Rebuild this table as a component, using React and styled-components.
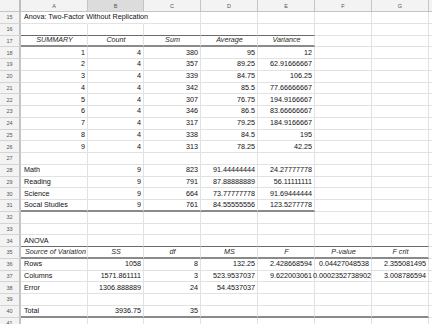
import React from "react";
import styled, { createGlobalStyle } from "styled-components";

const GlobalStyle = createGlobalStyle`
  html, body {
    margin: 0;
    padding: 0;
    background: #ffffff;
    overflow: hidden;
  }
`;

const Sheet = styled.div`
  display: grid;
  grid-template-columns: 21px 67px 56px 57px 57px 57px 57px 57px 1fr;
  grid-template-rows: 12px;
  grid-auto-rows: 11.75px;
  width: 432px;
  height: 324px;
  overflow: hidden;
  background: #ffffff;
  font-family: "Liberation Sans", Arial, sans-serif;
  color: #111111;
`;

const Corner = styled.div`
  box-sizing: border-box;
  background: #f3f3f3;
  border-right: 2px solid #bdbdbd;
  border-bottom: 1px solid #c4c4c4;
`;

const ColHead = styled.div`
  box-sizing: border-box;
  display: flex;
  align-items: center;
  justify-content: center;
  font-size: 5.5px;
  color: #555555;
  background: ${(p) => (p.$active ? "#dcdcdc" : "#f3f3f3")};
  border-right: 1px solid #c4c4c4;
  border-bottom: 1px solid #c4c4c4;
`;

const RowHead = styled.div`
  box-sizing: border-box;
  display: flex;
  align-items: center;
  justify-content: center;
  font-size: 5.5px;
  color: #555555;
  background: #f3f3f3;
  border-right: 2px solid #c4c4c4;
  border-bottom: 1px solid #d4d4d4;
`;

const Cell = styled.div`
  box-sizing: border-box;
  display: flex;
  align-items: center;
  justify-content: ${(p) =>
    p.$align === "right" ? "flex-end" : p.$align === "center" ? "center" : "flex-start"};
  padding: 0 ${(p) => (p.$tight ? "0" : "2px")} 1px 3px;
  font-size: 7.2px;
  line-height: 1;
  white-space: nowrap;
  overflow: visible;
  font-style: ${(p) => (p.$italic ? "italic" : "normal")};
  color: ${(p) => (p.$italic ? "#2a2a2a" : "#111111")};
  border-right: 1px solid ${(p) => (p.$flow ? "transparent" : "#e2e2e2")};
  border-bottom: ${(p) =>
    p.$edge === "thick"
      ? "2px solid #8a8a8a"
      : p.$edge === "thin"
      ? "1px solid #6a6a6a"
      : "1px solid #e2e2e2"};
`;

const rows = [
  { n: 15, cells: ["Anova: Two-Factor Without Replication"], flow: 2 },
  { n: 16, cells: [], edge: ["thin", 5] },
  { n: 17, cells: ["SUMMARY", "Count", "Sum", "Average", "Variance"], head: true, edge: ["thick", 5] },
  { n: 18, cells: ["1", "4", "380", "95", "12"] },
  { n: 19, cells: ["2", "4", "357", "89.25", "62.91666667"] },
  { n: 20, cells: ["3", "4", "339", "84.75", "106.25"] },
  { n: 21, cells: ["4", "4", "342", "85.5", "77.66666667"] },
  { n: 22, cells: ["5", "4", "307", "76.75", "194.9166667"] },
  { n: 23, cells: ["6", "4", "346", "86.5", "83.66666667"] },
  { n: 24, cells: ["7", "4", "317", "79.25", "184.9166667"] },
  { n: 25, cells: ["8", "4", "338", "84.5", "195"] },
  { n: 26, cells: ["9", "4", "313", "78.25", "42.25"] },
  { n: 27, cells: [] },
  { n: 28, cells: ["Math", "9", "823", "91.44444444", "24.27777778"] },
  { n: 29, cells: ["Reading", "9", "791", "87.88888889", "56.11111111"] },
  { n: 30, cells: ["Science", "9", "664", "73.77777778", "91.69444444"] },
  { n: 31, cells: ["Socal Studies", "9", "761", "84.55555556", "123.5277778"], edge: ["thick", 5] },
  { n: 32, cells: [] },
  { n: 33, cells: [] },
  { n: 34, cells: ["ANOVA"], edge: ["thin", 7] },
  {
    n: 35,
    cells: ["Source of Variation", "SS", "df", "MS", "F", "P-value", "F crit"],
    head: true,
    edge: ["thick", 7],
  },
  { n: 36, cells: ["Rows", "1058", "8", "132.25", "2.428668594", "0.04427048538", "2.355081495"] },
  { n: 37, cells: ["Columns", "1571.861111", "3", "523.9537037", "9.622003061", "0.0002352738902", "3.008786594"] },
  { n: 38, cells: ["Error", "1306.888889", "24", "54.4537037"] },
  { n: 39, cells: [] },
  { n: 40, cells: ["Total", "3936.75", "35"], edge: ["thick", 7] },
  { n: 41, cells: [] },
];

const LETTERS = ["A", "B", "C", "D", "E", "F", "G", ""];

const isNumber = (v) => /^-?[\d.]+$/.test(v);

function Row({ row }) {
  return (
    <>
      <RowHead>{row.n}</RowHead>
      {LETTERS.map((_, i) => {
        const value = row.cells[i] || "";
        const align = row.head ? "center" : isNumber(value) ? "right" : "left";
        const edge = row.edge && i < row.edge[1] ? row.edge[0] : undefined;
        return (
          <Cell
            key={i}
            $align={align}
            $italic={row.head}
            $edge={edge}
            $flow={row.flow && i < row.flow}
            $tight={value.length > 13}
          >
            {value}
          </Cell>
        );
      })}
    </>
  );
}

export default function App() {
  return (
    <>
      <GlobalStyle />
      <Sheet>
        <Corner />
        {LETTERS.map((l, i) => (
          <ColHead key={i} $active={l === "B"}>
            {l}
          </ColHead>
        ))}
        {rows.map((r) => (
          <Row key={r.n} row={r} />
        ))}
      </Sheet>
    </>
  );
}
